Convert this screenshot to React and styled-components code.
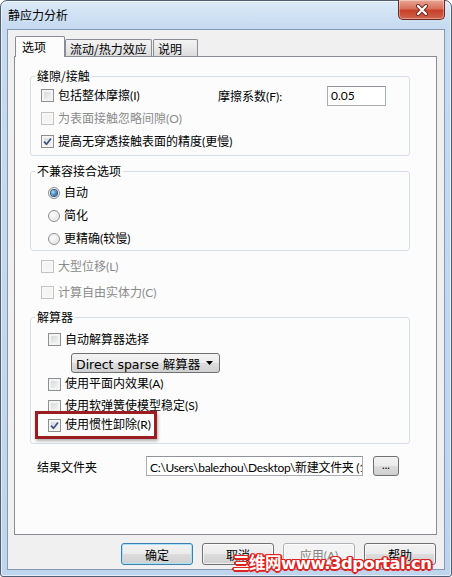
import React from 'react';
import styled, { createGlobalStyle } from 'styled-components';

const GlobalStyle = createGlobalStyle`
  html, body {
    margin: 0;
    padding: 0;
    background: #ffffff;
  }
  body {
    width: 452px;
    height: 577px;
    overflow: hidden;
    font-family: Lato, "Noto Sans CJK SC", sans-serif;
    font-size: 12px;
    color: #000000;
  }
`;

const Window = styled.div`
  position: relative;
  box-sizing: border-box;
  width: 452px;
  height: 577px;
  display: flex;
  flex-direction: column;
  padding: 0 6px 6px 6px;
  border: 1px solid #4f5f75;
  border-radius: 7px 7px 3px 3px;
  background: linear-gradient(#dce9f7, #c6dbf1 26px, #bfd5ee);
  box-shadow: inset 0 0 0 1px rgba(255, 255, 255, 0.6);
`;

const TitleBar = styled.div`
  height: 28px;
  display: flex;
  align-items: flex-start;
  justify-content: space-between;
`;

const Title = styled.span`
  margin: 6px 0 0 1px;
  font-family: "Noto Sans CJK SC", sans-serif;
  font-size: 12px;
  line-height: 16px;
  color: #000000;
`;

const CloseButton = styled.div`
  box-sizing: border-box;
  width: 47px;
  height: 20px;
  margin-top: -1px;
  display: flex;
  align-items: center;
  justify-content: center;
  border: 1px solid #6b2a20;
  border-top: none;
  border-radius: 0 0 5px 5px;
  background: linear-gradient(#e9a796, #d8705a 45%, #c7402a 55%, #d2644c);
  box-shadow: inset 0 0 0 1px rgba(255, 255, 255, 0.35);
`;

const Client = styled.div`
  flex: 1;
  display: flex;
  flex-direction: column;
  background: #f0f0f0;
  border: 1px solid #8399b6;
  padding: 6px 7px 0 6px;
`;

const TabStrip = styled.div`
  height: 20px;
  display: flex;
  align-items: flex-end;
  padding-left: 1px;
`;

const Tab = styled.div`
  box-sizing: border-box;
  width: ${(p) => p.$width}px;
  height: ${(p) => (p.$active ? 21 : 17)}px;
  margin-bottom: ${(p) => (p.$active ? -1 : 0)}px;
  margin-right: ${(p) => (p.$active ? 0 : 1)}px;
  position: relative;
  z-index: ${(p) => (p.$active ? 1 : 0)};
  display: flex;
  align-items: center;
  padding: ${(p) => (p.$active ? '0 0 1px 6px' : '1px 0 0 4px')};
  border: 1px solid #898c95;
  border-bottom: none;
  border-radius: 2px 2px 0 0;
  background: ${(p) => (p.$active ? '#fcfcfc' : 'linear-gradient(#f3f3f3, #e9e9e9 50%, #dcdcdc)')};
  font-family: "Noto Sans CJK SC", sans-serif;
  font-size: 12px;
  line-height: 16px;
`;

const Panel = styled.div`
  box-sizing: border-box;
  width: 423px;
  height: 479px;
  display: flex;
  flex-direction: column;
  align-items: flex-start;
  padding: 11px 0 0 15px;
  border: 1px solid #898c95;
  background: #fcfcfc;
`;

const Group = styled.fieldset`
  box-sizing: border-box;
  width: 380px;
  min-width: 0;
  margin: ${(p) => p.$mt || 0}px 0 0 0;
  padding: ${(p) => p.$pt || 0}px 0 ${(p) => p.$pb || 0}px 0;
  border: 1px solid #d5dfe5;
  border-radius: 3px;
`;

const Legend = styled.legend`
  margin-left: 4px;
  padding: 0 2px;
  font-family: "Noto Sans CJK SC", sans-serif;
  font-size: 12px;
  line-height: 16px;
`;

const GroupBody = styled.div`
  display: flex;
  flex-direction: column;
  align-items: flex-start;
  padding-left: ${(p) => p.$pl}px;
`;

const Row = styled.div`
  height: ${(p) => p.$h || 23}px;
  display: flex;
  align-items: center;
`;

const Item = styled.label`
  display: flex;
  align-items: center;
  gap: 4px;
  width: ${(p) => (p.$width ? `${p.$width}px` : 'auto')};
  color: ${(p) => (p.$disabled ? '#8b8b8b' : '#000000')};
  font-size: 12px;
  line-height: 16px;
  white-space: nowrap;
`;

const Box = styled.span`
  box-sizing: border-box;
  width: 13px;
  height: 13px;
  flex: none;
  display: flex;
  align-items: center;
  justify-content: center;
  border: 1px solid ${(p) => (p.$disabled ? '#c3c3c3' : '#8e8f8f')};
  background: ${(p) =>
    p.$disabled ? '#f4f4f4' : 'linear-gradient(135deg, #cfd2d7 0%, #eeeeef 70%, #f8f8f8 100%)'};
  box-shadow: inset 0 0 0 2px ${(p) => (p.$disabled ? '#f7f7f7' : '#f4f4f4')};
`;

const Radio = styled.span`
  box-sizing: border-box;
  width: 12px;
  height: 12px;
  flex: none;
  display: flex;
  align-items: center;
  justify-content: center;
  border: 1px solid #8e8f8f;
  border-radius: 50%;
  background: radial-gradient(circle at 40% 40%, #fdfdfd, #d8d9db);
  box-shadow: inset 0 0 0 1px #f4f4f4;
`;

const RadioDot = styled.span`
  width: 6px;
  height: 6px;
  border-radius: 50%;
  background: radial-gradient(circle at 35% 35%, #b5dcf7, #2c6aa3 70%, #1f4f7e);
  box-shadow: 0 0 0 1px #2b5c8a;
`;

const FieldLabel = styled.span`
  width: 109px;
  font-size: 12px;
  white-space: nowrap;
`;

const TextInput = styled.div`
  box-sizing: border-box;
  width: ${(p) => p.$width}px;
  height: 20px;
  display: flex;
  align-items: center;
  padding-left: 3px;
  overflow: hidden;
  white-space: nowrap;
  border: 1px solid #abadb3;
  border-top-color: #8f939b;
  background: #ffffff;
  font-size: 12px;
  letter-spacing: ${(p) => (p.$tight ? '-0.3px' : 'normal')};
`;

const Select = styled.div`
  box-sizing: border-box;
  width: 149px;
  height: 20px;
  margin: 2px 0 0 23px;
  display: flex;
  align-items: center;
  justify-content: space-between;
  padding: 0 6px 0 4px;
  border: 1px solid #707070;
  border-radius: 3px;
  background: linear-gradient(#f4f4f4, #ebebeb 50%, #dddddd 51%, #d0d0d0);
  font-family: "DejaVu Sans", "Noto Sans CJK SC", sans-serif;
  font-size: 12.5px;
  white-space: nowrap;
`;

const Highlight = styled.div`
  box-sizing: border-box;
  width: 122px;
  margin: -6px 0 0 -13px;
  padding-left: 10px;
  border: 3px solid #9b1d22;
  box-shadow: 1px 2px 3px rgba(0, 0, 0, 0.3);
`;

const Standalone = styled.div`
  display: flex;
  flex-direction: column;
  gap: 3px;
  margin-top: 4px;
  padding-left: 11px;
`;

const ResultRow = styled.div`
  height: 20px;
  margin-top: 12px;
  padding-left: 7px;
  display: flex;
  align-items: center;
`;

const SmallButton = styled.div`
  box-sizing: border-box;
  width: 26px;
  height: 20px;
  margin-left: 10px;
  display: flex;
  align-items: center;
  justify-content: center;
  border: 1px solid #707070;
  border-radius: 3px;
  background: linear-gradient(#f2f2f2, #ebebeb 50%, #dddddd 51%, #cfcfcf);
  font-size: 11px;
  line-height: 10px;
  padding-bottom: 3px;
`;

const ButtonRow = styled.div`
  display: flex;
  justify-content: flex-end;
  gap: 9px;
  margin-top: 8px;
  padding-right: 1px;
`;

const Button = styled.div`
  box-sizing: border-box;
  width: 72px;
  height: 22px;
  display: flex;
  align-items: center;
  justify-content: center;
  border: 1px solid ${(p) => (p.$default ? '#3c7fb1' : p.$disabled ? '#adb2b5' : '#707070')};
  border-radius: 3px;
  background: ${(p) =>
    p.$disabled ? '#f4f4f4' : 'linear-gradient(#f2f2f2, #ebebeb 50%, #dddddd 51%, #cfcfcf)'};
  box-shadow: ${(p) => (p.$default ? 'inset 0 0 0 1px #a9e2fa' : 'inset 0 0 0 1px rgba(255,255,255,0.7)')};
  color: ${(p) => (p.$disabled ? '#838383' : '#000000')};
  font-size: 12px;
`;

const Watermark = styled.div`
  position: absolute;
  left: 232px;
  top: 553px;
  font-family: "DejaVu Sans", "Noto Sans CJK SC", sans-serif;
  font-weight: bold;
  font-size: 16.5px;
  line-height: 20px;
  letter-spacing: -0.5px;
  color: #ffffff;
  white-space: nowrap;
  text-shadow:
    1px 0 0 #e0211d, -1px 0 0 #e0211d, 0 1px 0 #e0211d, 0 -1px 0 #e0211d,
    1px 1px 0 #e0211d, -1px -1px 0 #e0211d, 1px -1px 0 #e0211d, -1px 1px 0 #e0211d,
    2px 0 0 #e0211d, -2px 0 0 #e0211d, 0 2px 0 #e0211d;
`;

const CheckMark = () => (
  <svg width="9" height="9" viewBox="0 0 9 9">
    <path d="M1 4.6 L3.5 7.2 L8 1.4" fill="none" stroke="#3d5484" strokeWidth="1.7" />
  </svg>
);

const CloseGlyph = () => (
  <svg width="14" height="12" viewBox="0 0 14 12">
    <path d="M3 2 L11 10 M11 2 L3 10" stroke="#6b2a20" strokeWidth="4" strokeLinecap="round" />
    <path d="M3 2 L11 10 M11 2 L3 10" stroke="#ffffff" strokeWidth="2.2" strokeLinecap="round" />
  </svg>
);

const Check = ({ checked, disabled, width, children }) => (
  <Item $disabled={disabled} $width={width}>
    <Box $disabled={disabled}>{checked && <CheckMark />}</Box>
    {children}
  </Item>
);

const Option = ({ selected, children }) => (
  <Item>
    <Radio>{selected && <RadioDot />}</Radio>
    {children}
  </Item>
);

const tabs = [
  { label: '选项', width: 50, active: true },
  { label: '流动/热力效应', width: 87 },
  { label: '说明', width: 45 },
];

export default function App() {
  return (
    <>
      <GlobalStyle />
      <Window>
        <TitleBar>
          <Title>静应力分析</Title>
          <CloseButton>
            <CloseGlyph />
          </CloseButton>
        </TitleBar>
        <Client>
          <TabStrip>
            {tabs.map((t) => (
              <Tab key={t.label} $width={t.width} $active={t.active}>
                {t.label}
              </Tab>
            ))}
          </TabStrip>
          <Panel>
            <Group $pb={2}>
              <Legend>缝隙/接触</Legend>
              <GroupBody $pl={10}>
                <Row>
                  <Check width={177}>包括整体摩擦(I)</Check>
                  <FieldLabel>摩擦系数(F):</FieldLabel>
                  <TextInput $width={59}>0.05</TextInput>
                </Row>
                <Row>
                  <Check disabled>为表面接触忽略间隙(O)</Check>
                </Row>
                <Row>
                  <Check checked>提高无穿透接触表面的精度(更慢)</Check>
                </Row>
              </GroupBody>
            </Group>

            <Group $mt={7} $pt={2}>
              <Legend>不兼容接合选项</Legend>
              <GroupBody $pl={17}>
                <Row>
                  <Option selected>自动</Option>
                </Row>
                <Row>
                  <Option>简化</Option>
                </Row>
                <Row>
                  <Option>更精确(较慢)</Option>
                </Row>
              </GroupBody>
            </Group>

            <Standalone>
              <Row>
                <Check disabled>大型位移(L)</Check>
              </Row>
              <Row>
                <Check disabled>计算自由实体力(C)</Check>
              </Row>
            </Standalone>

            <Group $mt={5} $pt={3} $pb={4}>
              <Legend>解算器</Legend>
              <GroupBody $pl={17}>
                <Row>
                  <Check>自动解算器选择</Check>
                </Row>
                <Select>
                  <span>Direct sparse 解算器</span>
                  <svg width="7" height="4" viewBox="0 0 7 4">
                    <path d="M0 0 H7 L3.5 4 Z" fill="#000000" />
                  </svg>
                </Select>
                <Row $h={22}>
                  <Check>使用平面内效果(A)</Check>
                </Row>
                <Row $h={22}>
                  <Check>使用软弹簧使模型稳定(S)</Check>
                </Row>
                <Highlight>
                  <Row $h={22}>
                    <Check checked>使用惯性卸除(R)</Check>
                  </Row>
                </Highlight>
              </GroupBody>
            </Group>

            <ResultRow>
              <FieldLabel>结果文件夹</FieldLabel>
              <TextInput $width={217} $tight>C:\Users\balezhou\Desktop\新建文件夹 (1)</TextInput>
              <SmallButton>...</SmallButton>
            </ResultRow>
          </Panel>
          <ButtonRow>
            <Button $default>确定</Button>
            <Button>取消</Button>
            <Button $disabled>应用(A)</Button>
            <Button>帮助</Button>
          </ButtonRow>
        </Client>
        <Watermark>三维网www.3dportal.cn</Watermark>
      </Window>
    </>
  );
}
